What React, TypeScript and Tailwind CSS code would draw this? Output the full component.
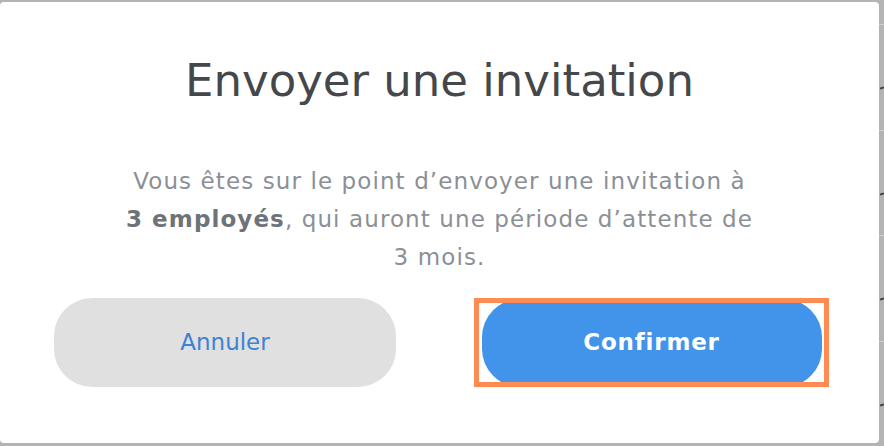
const font = { fontFamily: '"DejaVu Sans", "Liberation Sans", sans-serif' };

const EdgeRow = () => (
  <div className="h-[114px] border-t border-[#cfcfcf] flex flex-col">
    <div className="mt-[62px] ml-auto h-[2px] w-[4px] bg-[#3a3a3a] -rotate-[20deg]" />
  </div>
);

export default function App() {
  return (
    <div className="flex h-[446px] w-[884px] bg-[#b4b4b4] pt-[2px]" style={font}>
      <div className="flex h-[441px] w-[879px] flex-col items-center rounded-[4px] bg-white">
        <h1 className="mt-[51px] text-[45px] leading-[56px] text-[#45474b]">
          Envoyer une invitation
        </h1>

        <p className="mt-[53px] text-center text-[23px] leading-[38px] tracking-[1.1px] text-[#8b8f96]">
          Vous êtes sur le point d’envoyer une invitation à
          <br />
          <span className="font-bold text-[#6e7279]">3 employés</span>, qui auront une période d’attente de
          <br />
          3 mois.
        </p>

        <div className="mt-[22px] flex w-full items-center gap-[78px] pl-[54px]">
          <button className="h-[89px] w-[342px] rounded-[38px] bg-[#e0e0e0] text-[23px] text-[#3c83d4]">
            Annuler
          </button>
          <div className="flex h-[89px] w-[355px] items-center justify-center overflow-hidden border-[5px] border-[#ff8a52]">
            <button className="h-[88px] w-[340px] shrink-0 rounded-[38px] bg-[#4293ea] text-[23px] font-bold tracking-[0.8px] text-white">
              Confirmer
            </button>
          </div>
        </div>
      </div>

      <div className="flex flex-1 flex-col pt-[22px]">
        <EdgeRow />
        <EdgeRow />
        <EdgeRow />
        <EdgeRow />
      </div>
    </div>
  );
}
